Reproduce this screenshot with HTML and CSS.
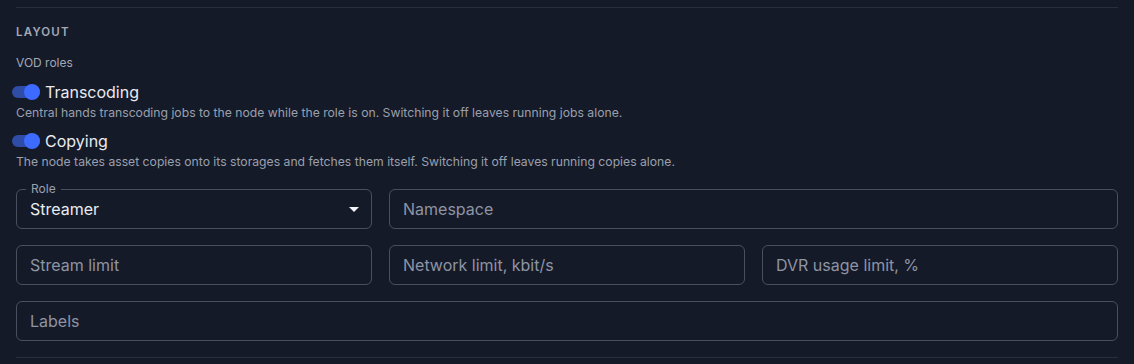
FILE: index.html
```html
<!DOCTYPE html>
<html lang="en">

<head>
  <meta charset="UTF-8">
  <title>Layout</title>
  <link rel="stylesheet" href="styles.css">
</head>

<body>
  <section class="panel">
    <div class="section-title">LAYOUT</div>
    <div class="group-label">VOD roles</div>

    <!-- roles -->
    <div class="role">
      <label class="switch-row">
        <span class="switch on"><span class="track"></span><span class="thumb"></span></span>
        <span class="switch-label">Transcoding</span>
      </label>
      <p class="helper">Central hands transcoding jobs to the node while the role is on. Switching it off leaves running jobs alone.</p>
    </div>
    <div class="role">
      <label class="switch-row">
        <span class="switch on"><span class="track"></span><span class="thumb"></span></span>
        <span class="switch-label">Copying</span>
      </label>
      <p class="helper">The node takes asset copies onto its storages and fetches them itself. Switching it off leaves running copies alone.</p>
    </div>

    <!-- fields -->
    <div class="fields">
      <div class="field">
        <span class="legend">Role</span>
        <span class="value">Streamer</span>
        <span class="caret"></span>
      </div>
      <div class="field span-2"><span class="placeholder">Namespace</span></div>
      <div class="field"><span class="placeholder">Stream limit</span></div>
      <div class="field"><span class="placeholder">Network limit, kbit/s</span></div>
      <div class="field"><span class="placeholder">DVR usage limit, %</span></div>
      <div class="field span-3"><span class="placeholder">Labels</span></div>
    </div>
  </section>
</body>

</html>
```

FILE: styles.css
```css
* {
  margin: 0;
  padding: 0;
  box-sizing: border-box;
}

body {
  background: #151a29;
  color: #e6e8ee;
  font-family: Inter, "Noto Sans", sans-serif;
  padding: 7px 16px 0 16px;
}

/* section with top/bottom dividers */
.panel {
  border-top: 1px solid #2a2f3d;
  border-bottom: 1px solid #2a2f3d;
  padding: 17px 0 16px;
}

.section-title {
  font-size: 11.5px;
  font-weight: 600;
  letter-spacing: 1.2px;
  color: #a3a8b5;
  line-height: 14px;
}

.group-label {
  font-size: 12px;
  color: #a3a8b5;
  line-height: 16px;
  margin-top: 16px;
}

.role {
  margin-top: 9px;
}

.role + .role {
  margin-top: 8px;
}

.switch-row {
  display: flex;
  align-items: center;
  height: 24px;
}

.switch {
  position: relative;
  width: 28px;
  height: 16px;
  margin-left: -4px;
  margin-right: 5px;
}

.switch .track {
  position: absolute;
  left: 0;
  top: 2px;
  width: 28px;
  height: 12px;
  border-radius: 6px;
  background: #2f4ca6;
}

.switch .thumb {
  position: absolute;
  left: 12px;
  top: 0;
  width: 16px;
  height: 16px;
  border-radius: 50%;
  background: #3d6bff;
}

.switch-label {
  font-size: 16px;
  color: #e9ebf0;
}

.helper {
  font-size: 12.2px;
  color: #9aa0ad;
  line-height: 16px;
  margin-top: 1px;
}

/* outlined text fields */
.fields {
  display: grid;
  grid-template-columns: repeat(3, 1fr);
  gap: 16px 17px;
  margin-top: 19px;
}

.field {
  position: relative;
  height: 40px;
  border: 1px solid #4a4f5d;
  border-radius: 6px;
  display: flex;
  align-items: center;
  padding: 0 13px;
  font-size: 16px;
}

.span-2 {
  grid-column: span 2;
}

.span-3 {
  grid-column: 1 / -1;
}

.placeholder {
  color: #8e94a3;
}

.value {
  color: #e9ebf0;
  flex: 1;
}

.legend {
  position: absolute;
  top: -8px;
  left: 9px;
  padding: 0 5px;
  font-size: 12px;
  line-height: 14px;
  color: #9aa0ad;
  background: #151a29;
}

.caret {
  width: 0;
  height: 0;
  border-left: 5px solid transparent;
  border-right: 5px solid transparent;
  border-top: 5px solid #f2f3f6;
  margin-right: -1px;
}
```
